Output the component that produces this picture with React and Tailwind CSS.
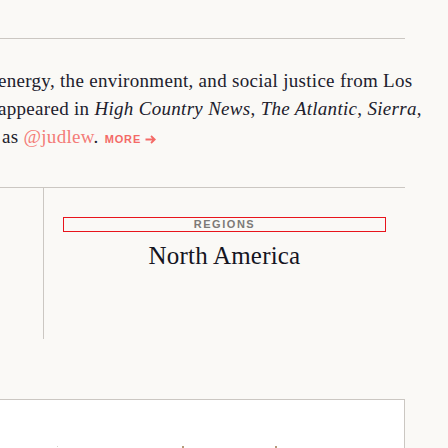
export default function App() {
  return (
    <div className="h-[448px] w-[448px] overflow-hidden bg-[#faf9f6]">
      <div className="w-[405px]">
        {/* top spacer */}
        <div className="h-[39px] border-b border-[#cbc7c2]" />

        {/* bio paragraph, cut off at the left */}
        <div className="h-[149px] border-b border-[#cbc7c2] pt-[28px] font-['Liberation_Serif',serif] text-[19px] leading-[28px] tracking-[0.3px] text-[#20202c]">
          <div className="-ml-[2px] whitespace-nowrap">energy, the environment, and social justice from Los</div>
          <div className="-ml-[2px] whitespace-nowrap">
            appeared in <i>High Country News</i>, <i>The Atlantic</i>, <i>Sierra</i>,
          </div>
          <div className="ml-[2px] flex items-baseline whitespace-nowrap">
            <span>
              as <span className="text-[#f47c78]">@judlew</span>.
            </span>
            <a className="ml-[6px] inline-flex items-center font-['Liberation_Sans',sans-serif] text-[11px] font-bold tracking-[0.08em] text-[#f46a66]">
              MORE
              <svg className="ml-[4px]" width="11" height="9" viewBox="0 0 11 9" fill="none" stroke="currentColor" strokeWidth="1.8">
                <path d="M0.5 4.5h9M6 1l3.8 3.5L6 8" />
              </svg>
            </a>
          </div>
        </div>

        {/* regions */}
        <div className="flex h-[151px]">
          <div className="w-[44px] border-r border-[#cbc7c2]" />
          <div className="flex-1 px-[19px] pt-[29px]">
            <div className="flex h-[15px] items-center justify-center border border-[#e8141c] font-['Liberation_Sans',sans-serif] text-[11px] font-bold tracking-[0.14em] text-[#7d7a77]">
              REGIONS
            </div>
            <div className="mt-[9px] text-center font-['Liberation_Serif',serif] text-[25px] leading-[30px] tracking-[0.2px] text-[#15151f]">
              North America
            </div>
          </div>
        </div>

        <div className="h-[60px]" />

        {/* card below */}
        <div className="relative h-[60px] border-t border-r border-[#cbc7c2] bg-white">
          <span className="absolute left-[57px] top-[46px] h-[1px] w-[1px] bg-[#d6d2cc]" />
          <span className="absolute left-[182px] top-[46px] h-[2px] w-[2px] bg-[#b59a7a]" />
          <span className="absolute left-[275px] top-[46px] h-[2px] w-[2px] bg-[#b59a7a]" />
        </div>
      </div>
    </div>
  );
}
